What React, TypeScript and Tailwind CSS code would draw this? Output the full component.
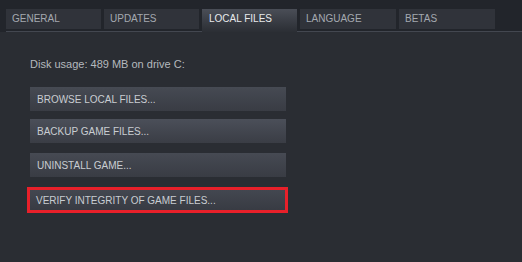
import React from "react";

const tabs = [
  { label: "GENERAL", w: "w-[95px]" },
  { label: "UPDATES", w: "w-[95px]" },
  { label: "LOCAL FILES", w: "w-[95px]", active: true },
  { label: "LANGUAGE", w: "w-[96px]" },
  { label: "BETAS", w: "w-[96px]" },
];

export default function App() {
  return (
    <div
      className="w-[522px] h-[262px] bg-[#2a2d33] overflow-hidden flex flex-col"
      style={{ fontFamily: '"Liberation Sans", Arial, sans-serif' }}
    >
      <div className="bg-[#22252b] pt-[9px] pl-[6px]">
        <div className="flex items-start gap-[3px] h-[23px]">
          {tabs.map((t) =>
            t.active ? (
              <div
                key={t.label}
                className={`${t.w} h-[23px] relative z-10 bg-gradient-to-b from-[#4a4e57] to-[#2b2e34] text-[#e8eaec] text-[10px] leading-[20px] pl-[7px]`}
              >
                {t.label}
              </div>
            ) : (
              <div
                key={t.label}
                className={`${t.w} h-[20px] bg-[#30333a] text-[#a4a9b0] text-[10px] leading-[20px] pl-[6px]`}
              >
                {t.label}
              </div>
            )
          )}
        </div>
      </div>
      <div className="bg-[#22252b] h-0 pl-[6px]">
        <div className="-mt-[1px] h-[1px] bg-[#434750]" />
      </div>
      <div className="pl-[30px] pt-[26px]">
        <div className="text-[11px] leading-[13px] text-[#b5b9be] h-[13px]">
          Disk usage: 489 MB on drive C:
        </div>
        <div className="mt-[16px] w-[256px] h-[24px] bg-gradient-to-b from-[#464a53] to-[#393c44] text-[#c9cdd2] text-[10px] flex items-center pl-[7px]">
          BROWSE LOCAL FILES...
        </div>
        <div className="mt-[8px] w-[256px] h-[24px] bg-gradient-to-b from-[#4b4f59] to-[#3a3d45] text-[#c9cdd2] text-[10px] flex items-center pl-[7px]">
          BACKUP GAME FILES...
        </div>
        <div className="mt-[10px] w-[256px] h-[24px] bg-gradient-to-b from-[#464a53] to-[#393c44] text-[#c9cdd2] text-[10px] flex items-center pl-[7px]">
          UNINSTALL GAME...
        </div>
        <div className="mt-[10px] -ml-[3px] w-[261px] h-[26px] border-[3px] border-[#e8202a] bg-gradient-to-b from-[#434750] to-[#383b43] text-[#c9cdd2] text-[10px] flex items-center pl-[6px]">
          VERIFY INTEGRITY OF GAME FILES...
        </div>
      </div>
    </div>
  );
}
